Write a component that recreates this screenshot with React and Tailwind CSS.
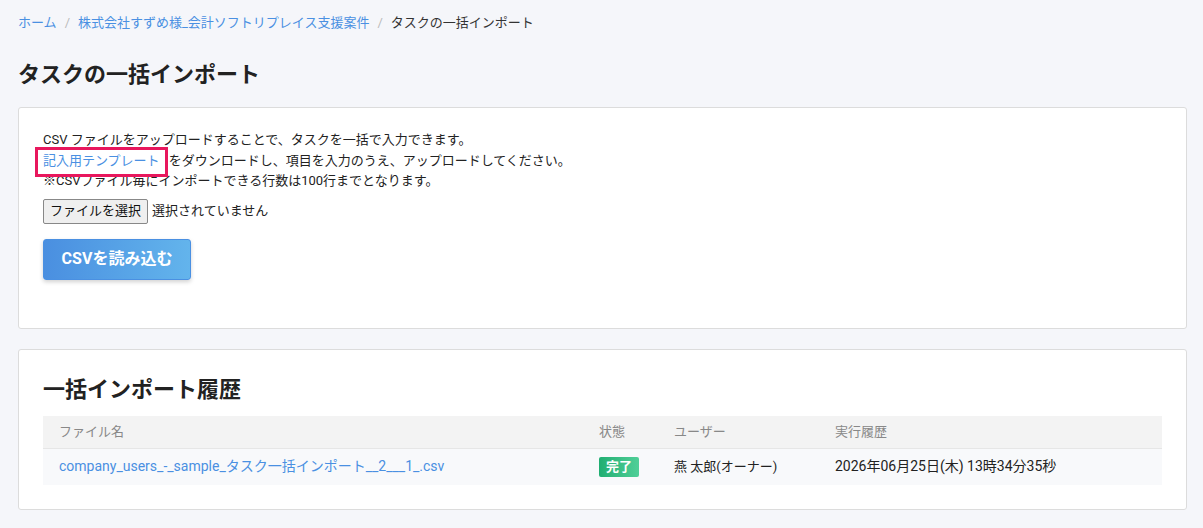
import React from 'react';

const font = { fontFamily: 'Roboto, "Noto Sans CJK JP", sans-serif' };

const rows = [
    {
        file: 'company_users_-_sample_タスク一括インポート__2___1_.csv',
        status: '完了',
        user: '燕 太郎(オーナー)',
        date: '2026年06月25日(木) 13時34分35秒',
    },
];

const App = () => {
    return (
        <div className="min-h-[528px] bg-[#f5f6fa] pl-[18px] pr-[16px] pt-[13px] pb-[18px] text-[#222]" style={font}>
            <nav className="flex items-center text-[13px] leading-[20px]">
                <a className="text-[#4a90e2]">ホーム</a>
                <span className="mx-[8px] text-[#bbb]">/</span>
                <a className="text-[#4a90e2]">株式会社すずめ様_会計ソフトリプレイス支援案件</a>
                <span className="mx-[8px] text-[#bbb]">/</span>
                <span className="text-[#333]">タスクの一括インポート</span>
            </nav>

            <h1 className="mt-[30px] text-[22px] font-bold leading-[24px] text-[#222]">タスクの一括インポート</h1>

            <section className="mt-[20px] rounded-[3px] border border-[#dcdcdc] bg-white px-[24px] pt-[22px] pb-[48px]">
                <div className="text-[13px] leading-[20.5px] text-[#222]">
                    <p>CSV ファイルをアップロードすることで、タスクを一括で入力できます。</p>
                    <p>
                        <span className="relative mr-[9px] inline-block">
                            <a className="text-[#4a90e2]">記入用テンプレート</a>
                            <span className="pointer-events-none absolute -left-[8px] -right-[8px] -top-[4px] -bottom-[6px] border-[3px] border-[#e8175d]" />
                        </span>
                        をダウンロードし、項目を入力のうえ、アップロードしてください。
                    </p>
                    <p>※CSVファイル毎にインポートできる行数は100行までとなります。</p>
                </div>
                <div className="mt-[7px] flex items-center gap-[4px] text-[13px]">
                    <button className="h-[25px] rounded-[2px] border border-[#888] bg-[#efefef] px-[6px] text-[13px] text-[#111]">
                        ファイルを選択
                    </button>
                    <span className="text-[#222]">選択されていません</span>
                </div>
                <button className="mt-[15px] h-[41px] w-[148px] rounded-[3px] border border-[#4a90e2] bg-gradient-to-r from-[#4a8fe0] to-[#63b4ec] text-[16px] font-bold text-white shadow-[0_2px_4px_rgba(0,0,0,0.18)]">
                    CSVを読み込む
                </button>
            </section>

            <section className="mt-[20px] rounded-[3px] border border-[#dcdcdc] bg-white px-[24px] pt-[28px] pb-[24px]">
                <h2 className="text-[22px] font-bold leading-[24px] text-[#222]">一括インポート履歴</h2>
                <table className="mt-[14px] w-full border-collapse text-[13px]">
                    <thead>
                        <tr className="h-[33px] bg-[#f3f3f3] text-left text-[#888]">
                            <th className="w-[540px] pl-[16px] font-normal">ファイル名</th>
                            <th className="w-[75px] pl-[16px] font-normal">状態</th>
                            <th className="w-[161px] pl-[16px] font-normal">ユーザー</th>
                            <th className="pl-[16px] font-normal">実行履歴</th>
                        </tr>
                    </thead>
                    <tbody>
                        {rows.map((r) => (
                            <tr key={r.file} className="h-[36px] border-t border-[#e6e6e6] bg-[#f8f9fb]">
                                <td className="pl-[16px] text-[14px] text-[#4a90e2]">{r.file}</td>
                                <td className="pl-[16px]">
                                    <span className="inline-block rounded-[2px] bg-gradient-to-r from-[#1fae72] to-[#4fcf98] px-[7px] text-[13px] font-bold leading-[20px] text-white">
                                        {r.status}
                                    </span>
                                </td>
                                <td className="pl-[16px] text-[#222]">{r.user}</td>
                                <td className="pl-[16px] text-[14px] text-[#222]">{r.date}</td>
                            </tr>
                        ))}
                    </tbody>
                </table>
            </section>
        </div>
    );
};

export default App;
